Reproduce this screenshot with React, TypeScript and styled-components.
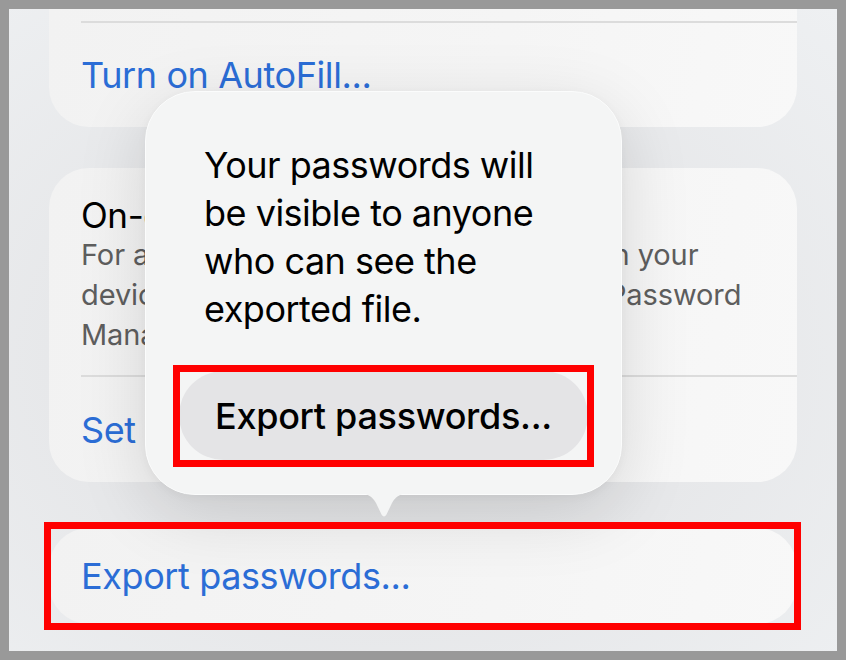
import React from "react";
import styled, { createGlobalStyle } from "styled-components";

const Global = createGlobalStyle`
  html, body { margin: 0; padding: 0; background: #999999; }
  body { font-family: Inter, "Liberation Sans", sans-serif; -webkit-font-smoothing: antialiased; }
  #root { width: 846px; height: 660px; }
`;

const Frame = styled.div`
  width: 846px;
  height: 660px;
  box-sizing: border-box;
  border: 9px solid #999999;
  background: #999999;
`;

const Screen = styled.div`
  position: relative;
  width: 100%;
  height: 100%;
  overflow: hidden;
  box-sizing: border-box;
  padding: 0 40px;
  display: flex;
  flex-direction: column;
  gap: 41px;
  background: radial-gradient(ellipse at 45% 55%, #dfe0e1 0%, #e6e7e9 45%, #eef0f2 100%);
`;

const Card = styled.div<{ $top?: boolean; $gapAbove?: number }>`
  background: linear-gradient(100deg, #f2f2f2 0%, #f5f5f5 60%, #f8f8f8 100%);
  border-radius: ${(p) => (p.$top ? "0 0 40px 40px" : "40px")};
  margin-top: ${(p) => p.$gapAbove ?? 0}px;
  padding-top: ${(p) => (p.$top ? 12 : 0)}px;
  display: flex;
  flex-direction: column;
  flex-shrink: 0;
`;

const Cell = styled.div<{ $h: number; $divider?: boolean }>`
  position: relative;
  height: ${(p) => p.$h}px;
  display: flex;
  align-items: center;
  padding-left: 32px;
  border-top: ${(p) => (p.$divider ? "2px solid transparent" : "none")};
  &::before {
    content: "";
    display: ${(p) => (p.$divider ? "block" : "none")};
    position: absolute;
    left: 32px;
    right: 0;
    top: -2px;
    height: 2px;
    background: #dcdcdc;
  }
`;

const Link = styled.span`
  font-size: 36px;
  color: #2b6dd6;
  letter-spacing: -0.4px;
  white-space: nowrap;
`;

const InfoBlock = styled.div`
  padding: 27px 32px 20px 32px;
`;

const Title = styled.div`
  font-size: 35px;
  line-height: 40px;
  color: #000;
  letter-spacing: -0.4px;
  white-space: nowrap;
`;

const Subtitle = styled.div`
  font-size: 29px;
  line-height: 40px;
  color: #5e5e5e;
  letter-spacing: -0.1px;
  white-space: nowrap;
`;

const Popover = styled.div`
  position: absolute;
  left: 136px;
  top: 82px;
  width: 477px;
  height: 404px;
  box-sizing: border-box;
  padding: 49px 33px 34px;
  border-radius: 50px;
  background: #f4f5f5;
  border: 1.5px solid #fbfcfc;
  box-shadow: 0 18px 70px rgba(0, 0, 0, 0.13), 0 2px 10px rgba(0, 0, 0, 0.04);
  display: flex;
  flex-direction: column;
`;

const Message = styled.div`
  padding-left: 25px;
  font-size: 36px;
  line-height: 48px;
  color: #000;
  letter-spacing: -0.5px;
  white-space: nowrap;
`;

const PillButton = styled.div`
  margin-top: 38px;
  height: 91px;
  border-radius: 46px;
  background: #e4e4e6;
  display: flex;
  align-items: center;
  justify-content: center;
  font-size: 36px;
  font-weight: 500;
  color: #000;
  letter-spacing: -0.3px;
`;

const Arrow = styled.svg`
  position: absolute;
  left: 211px;
  bottom: -25px;
  width: 54px;
  height: 26px;
`;

const Highlight = styled.div<{ $x: number; $y: number; $w: number; $h: number }>`
  position: absolute;
  left: ${(p) => p.$x}px;
  top: ${(p) => p.$y}px;
  width: ${(p) => p.$w}px;
  height: ${(p) => p.$h}px;
  box-sizing: border-box;
  border: 7px solid #ff0000;
  pointer-events: none;
`;

export default function App() {
  return (
    <>
      <Global />
      <Frame>
        <Screen>
          <Card $top>
            <Cell $h={104} $divider>
              <Link>Turn on AutoFill...</Link>
            </Cell>
          </Card>

          <Card>
            <InfoBlock>
              <Title>On-device encryption</Title>
              <Subtitle>For added safety, encrypt passwords on your</Subtitle>
              <Subtitle>device before they're saved to Google Password</Subtitle>
              <Subtitle>Manager.</Subtitle>
            </InfoBlock>
            <Cell $h={105} $divider>
              <Link>Set up</Link>
            </Cell>
          </Card>

          <Card $gapAbove={5}>
            <Cell $h={96}>
              <Link>Export passwords...</Link>
            </Cell>
          </Card>

          <Popover>
            <Message>
              Your passwords will
              <br />
              be visible to anyone
              <br />
              who can see the
              <br />
              exported file.
            </Message>
            <PillButton>Export passwords...</PillButton>
            <Arrow viewBox="0 0 54 26">
              <path
                d="M0 0 C10 0 15 3 19 10 L24.5 21.5 Q27 25.5 29.5 21.5 L35 10 C39 3 44 0 54 0 Z"
                fill="#f4f5f5"
              />
            </Arrow>
          </Popover>

          <Highlight $x={164} $y={356} $w={421} $h={102} />
          <Highlight $x={35} $y={513} $w={757} $h={108} />
        </Screen>
      </Frame>
    </>
  );
}
